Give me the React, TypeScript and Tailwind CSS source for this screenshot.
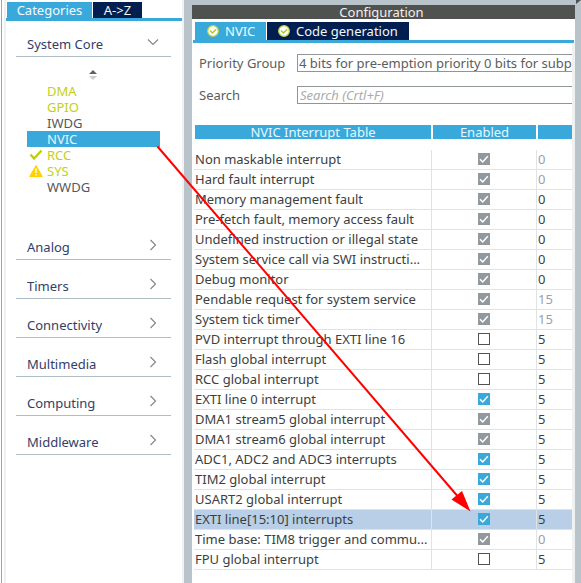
import { useState } from "react";

type Peripheral = { name: string; tone: "used" | "plain" | "selected"; mark?: "ok" | "warn" };

const peripherals: Peripheral[] = [
  { name: "DMA", tone: "used" },
  { name: "GPIO", tone: "used" },
  { name: "IWDG", tone: "plain" },
  { name: "NVIC", tone: "selected" },
  { name: "RCC", tone: "used", mark: "ok" },
  { name: "SYS", tone: "used", mark: "warn" },
  { name: "WWDG", tone: "plain" },
];

const toneClass = {
  used: "text-[#c3d014]",
  plain: "text-[#55585b]",
  selected: "bg-[#39a9dc] text-[#e4f5fc]",
};

const groups = ["Analog", "Timers", "Connectivity", "Multimedia", "Computing", "Middleware"];

type Interrupt = {
  name: string;
  enabled: boolean;
  locked?: boolean;
  priority: number;
  fixed?: boolean;
  selected?: boolean;
};

const interrupts: Interrupt[] = [
  { name: "Non maskable interrupt", enabled: true, locked: true, priority: 0, fixed: true },
  { name: "Hard fault interrupt", enabled: true, locked: true, priority: 0, fixed: true },
  { name: "Memory management fault", enabled: true, locked: true, priority: 0 },
  { name: "Pre-fetch fault, memory access fault", enabled: true, locked: true, priority: 0 },
  { name: "Undefined instruction or illegal state", enabled: true, locked: true, priority: 0 },
  { name: "System service call via SWI instructi...", enabled: true, locked: true, priority: 0 },
  { name: "Debug monitor", enabled: true, locked: true, priority: 0 },
  { name: "Pendable request for system service", enabled: true, locked: true, priority: 15, fixed: true },
  { name: "System tick timer", enabled: true, locked: true, priority: 15, fixed: true },
  { name: "PVD interrupt through EXTI line 16", enabled: false, priority: 5 },
  { name: "Flash global interrupt", enabled: false, priority: 5 },
  { name: "RCC global interrupt", enabled: false, priority: 5 },
  { name: "EXTI line 0 interrupt", enabled: true, priority: 5 },
  { name: "DMA1 stream5 global interrupt", enabled: true, locked: true, priority: 5 },
  { name: "DMA1 stream6 global interrupt", enabled: true, locked: true, priority: 5 },
  { name: "ADC1, ADC2 and ADC3 interrupts", enabled: true, priority: 5 },
  { name: "TIM2 global interrupt", enabled: true, priority: 5 },
  { name: "USART2 global interrupt", enabled: true, priority: 5 },
  { name: "EXTI line[15:10] interrupts", enabled: true, priority: 5, selected: true },
  { name: "Time base: TIM8 trigger and commu...", enabled: true, locked: true, priority: 0, fixed: true },
  { name: "FPU global interrupt", enabled: false, priority: 5 },
];

function Chevron({ open = false }: { open?: boolean }) {
  return (
    <svg viewBox="0 0 12 12" className="size-3 shrink-0" fill="none" stroke="#85888a" strokeWidth="1.2" aria-hidden="true">
      <path d={open ? "M1 3.5 6 8.5 11 3.5" : "M3.5 1 8.5 6 3.5 11"} />
    </svg>
  );
}

function GroupButton({ name, open }: { name: string; open?: boolean }) {
  return (
    <button
      type="button"
      aria-expanded={!!open}
      className="flex h-[39px] w-full items-end justify-between border-b border-[#b0bec5] pr-3 pb-1 pl-[11px] text-left text-[#323e69]"
    >
      <span>{name}</span>
      <span className="pb-1">
        <Chevron open={open} />
      </span>
    </button>
  );
}

function StatusMark({ kind }: { kind?: "ok" | "warn" }) {
  if (kind === "ok") {
    return (
      <svg viewBox="0 0 14 12" className="h-3 w-[14px]" fill="none" aria-hidden="true">
        <path d="M1.5 5.5 5 9.5 12.5 1.5" stroke="#bccf00" strokeWidth="2.2" />
      </svg>
    );
  }
  if (kind === "warn") {
    return (
      <svg viewBox="0 0 14 12" className="h-3 w-[14px]" aria-hidden="true">
        <path d="M7 .5 13.3 11.5H.7Z" fill="#ffd200" stroke="#ffd200" strokeLinejoin="round" />
        <path d="M7 3.5V8M7 9.2V10.6" stroke="#fff" strokeWidth="1.4" />
      </svg>
    );
  }
  return null;
}

function TabCheck() {
  return (
    <svg viewBox="0 0 12 12" className="size-3 shrink-0" aria-hidden="true">
      <circle cx="6" cy="6" r="5.3" fill="#fff" stroke="#c3d14a" strokeWidth="1.3" />
      <path d="M3 5.5 5.5 8 9.2 4.2" fill="none" stroke="#b4c820" strokeWidth="1.5" />
    </svg>
  );
}

function Tick({ row }: { row: Interrupt }) {
  const [on, setOn] = useState(row.enabled);
  return (
    <span className="grid size-3">
      <input
        type="checkbox"
        aria-label={row.name}
        checked={on}
        disabled={row.locked}
        onChange={() => setOn(!on)}
        className="size-3 appearance-none border border-[#505255] bg-white [grid-area:1/1] checked:border-[#39a9dc] checked:bg-[#39a9dc] disabled:border-[#91989e] disabled:bg-[#91989e]"
      />
      {on && (
        <svg viewBox="0 0 12 12" className="pointer-events-none size-3 [grid-area:1/1]" fill="none" aria-hidden="true">
          <path d="M2 6.3 4.7 9 9.8 3.2" stroke="#fff" strokeWidth="1.5" />
        </svg>
      )}
    </span>
  );
}

export default function App() {
  return (
    <div className="relative flex min-h-screen overflow-hidden bg-white font-['Noto_Sans',sans-serif] text-[13px] leading-4">
      <aside className="flex w-[184px] shrink-0">
        <div className="w-[6px] border-r-2 border-[#f0f0f0]">
          <div className="h-full w-[2px] border-r border-[#a4a4a4]" />
        </div>
        <div className="min-w-0 flex-1 border-r-2 border-[#f0f2f4] pt-[2px]">
          <div className="flex h-[19px] gap-px border-b-[3px] border-[#39a9dc] pl-px">
            <button type="button" className="h-4 w-[85px] bg-[#39a9dc] text-[#f4fbfe]">Categories</button>
            <button type="button" className="h-4 w-[49px] bg-[#001f50] text-[#f4f6f8]">A-&gt;Z</button>
          </div>
          <div className="-mt-[3px] pr-[11px] pl-[10px]">
            <GroupButton name="System Core" open />
            <div className="flex h-[26px] items-end justify-center pr-[2px] pb-[3px]">
              <svg viewBox="0 0 8 10" className="h-[10px] w-2" aria-hidden="true">
                <path d="M0 4 4 0 8 4Z" fill="#606060" />
                <path d="M0 6 4 10 8 6Z" fill="#cccccc" />
              </svg>
            </div>
            <ul className="mr-[11px] ml-[11px]">
              {peripherals.map((p) => (
                <li key={p.name}>
                  <button type="button" className={`flex h-4 w-full items-center text-left ${toneClass[p.tone]}`}>
                    <span className="w-5 pl-[2px]">
                      <StatusMark kind={p.mark} />
                    </span>
                    {p.name}
                  </button>
                </li>
              ))}
            </ul>
            <div className="pt-[26px]">
              {groups.map((g) => (
                <GroupButton key={g} name={g} />
              ))}
            </div>
          </div>
        </div>
      </aside>

      <main className="min-w-0 flex-1 border-t-[5px] border-r-[6px] border-l-8 border-[#b8c4ca]">
        <h1 className="h-[14px] bg-[#505250] pr-1 text-center leading-[14px] text-[#f0f0f0]">Configuration</h1>
        <div className="mr-px ml-px flex h-6 gap-px border-b-[3px] border-[#39a9dc] pt-[3px] pl-[2px]">
          <button type="button" className="flex w-[71px] items-center gap-[6px] bg-[#39a9dc] pl-3 text-[#eef9fd]">
            <TabCheck />
            NVIC
          </button>
          <button type="button" className="flex w-[142px] items-center gap-[6px] bg-[#001f50] pl-[11px] whitespace-nowrap text-[#f4f6f8]">
            <TabCheck />
            Code generation
          </button>
        </div>
        <div className="ml-[2px] border-r-[3px] border-[#f0f2f2] pb-[13px]">
          <div className="grid grid-cols-[98px_1fr] items-center gap-y-[14px] pt-[11px] pl-[5px] text-[#5a5d60]">
            <label htmlFor="priority">Priority Group</label>
            <select id="priority" className="h-[18px] w-full min-w-0 appearance-none border border-r-0 border-[#909598] bg-white pl-px">
              <option>4 bits for pre-emption priority 0 bits for subpriority</option>
            </select>
            <label htmlFor="search">Search</label>
            <input
              id="search"
              placeholder="Search (Crtl+F)"
              className="h-[18px] w-full min-w-0 border border-r-0 border-[#909598] pl-[2px] placeholder:text-[#a9acae] placeholder:italic"
            />
          </div>
          <table className="mt-[21px] w-full table-fixed border-separate border-spacing-0">
            <colgroup>
              <col />
              <col className="w-[105px]" />
              <col className="w-[35px]" />
            </colgroup>
            <thead>
              <tr className="leading-[14px] text-[#e8f7fd]">
                <th className="h-[25px] border-x border-b-[11px] border-white bg-[#39a9dc] bg-clip-padding p-0 font-normal">NVIC Interrupt Table</th>
                <th className="border-x border-b-[11px] border-white bg-[#39a9dc] bg-clip-padding p-0 font-normal">Enabled</th>
                <th className="border-b-[11px] border-l border-white bg-[#39a9dc] bg-clip-padding p-0" aria-label="Preemption priority" />
              </tr>
            </thead>
            <tbody>
              {interrupts.map((row) => (
                <tr key={row.name} className={row.selected ? "bg-[#b9cfe7] align-top" : "bg-white align-top"}>
                  <td className="h-5 overflow-hidden border-r border-b border-[#e0e3e6] p-0 pt-px pl-px whitespace-nowrap text-[#3c3e40]">{row.name}</td>
                  <td className="border-r border-b border-[#e0e3e6] p-0 pt-[3px]">
                    <div className="flex justify-center">
                      <Tick row={row} />
                    </div>
                  </td>
                  <td className={`border-b border-[#e0e3e6] p-0 pt-px pl-px ${row.fixed ? "text-[#9a9fa8]" : "text-[#3c3e40]"}`}>{row.priority}</td>
                </tr>
              ))}
            </tbody>
          </table>
        </div>
      </main>

      <svg viewBox="0 0 581 583" className="pointer-events-none absolute top-0 left-0 h-[583px] w-[581px]" aria-hidden="true">
        <path d="M576 0H581L576 4Z" fill="#505250" />
        <path d="M157.5 146.5 460 499" stroke="#ff0000" strokeWidth="2" />
        <path d="M470.5 511.5 462 491 451.5 499.5Z" fill="#ff0000" />
      </svg>
    </div>
  );
}
